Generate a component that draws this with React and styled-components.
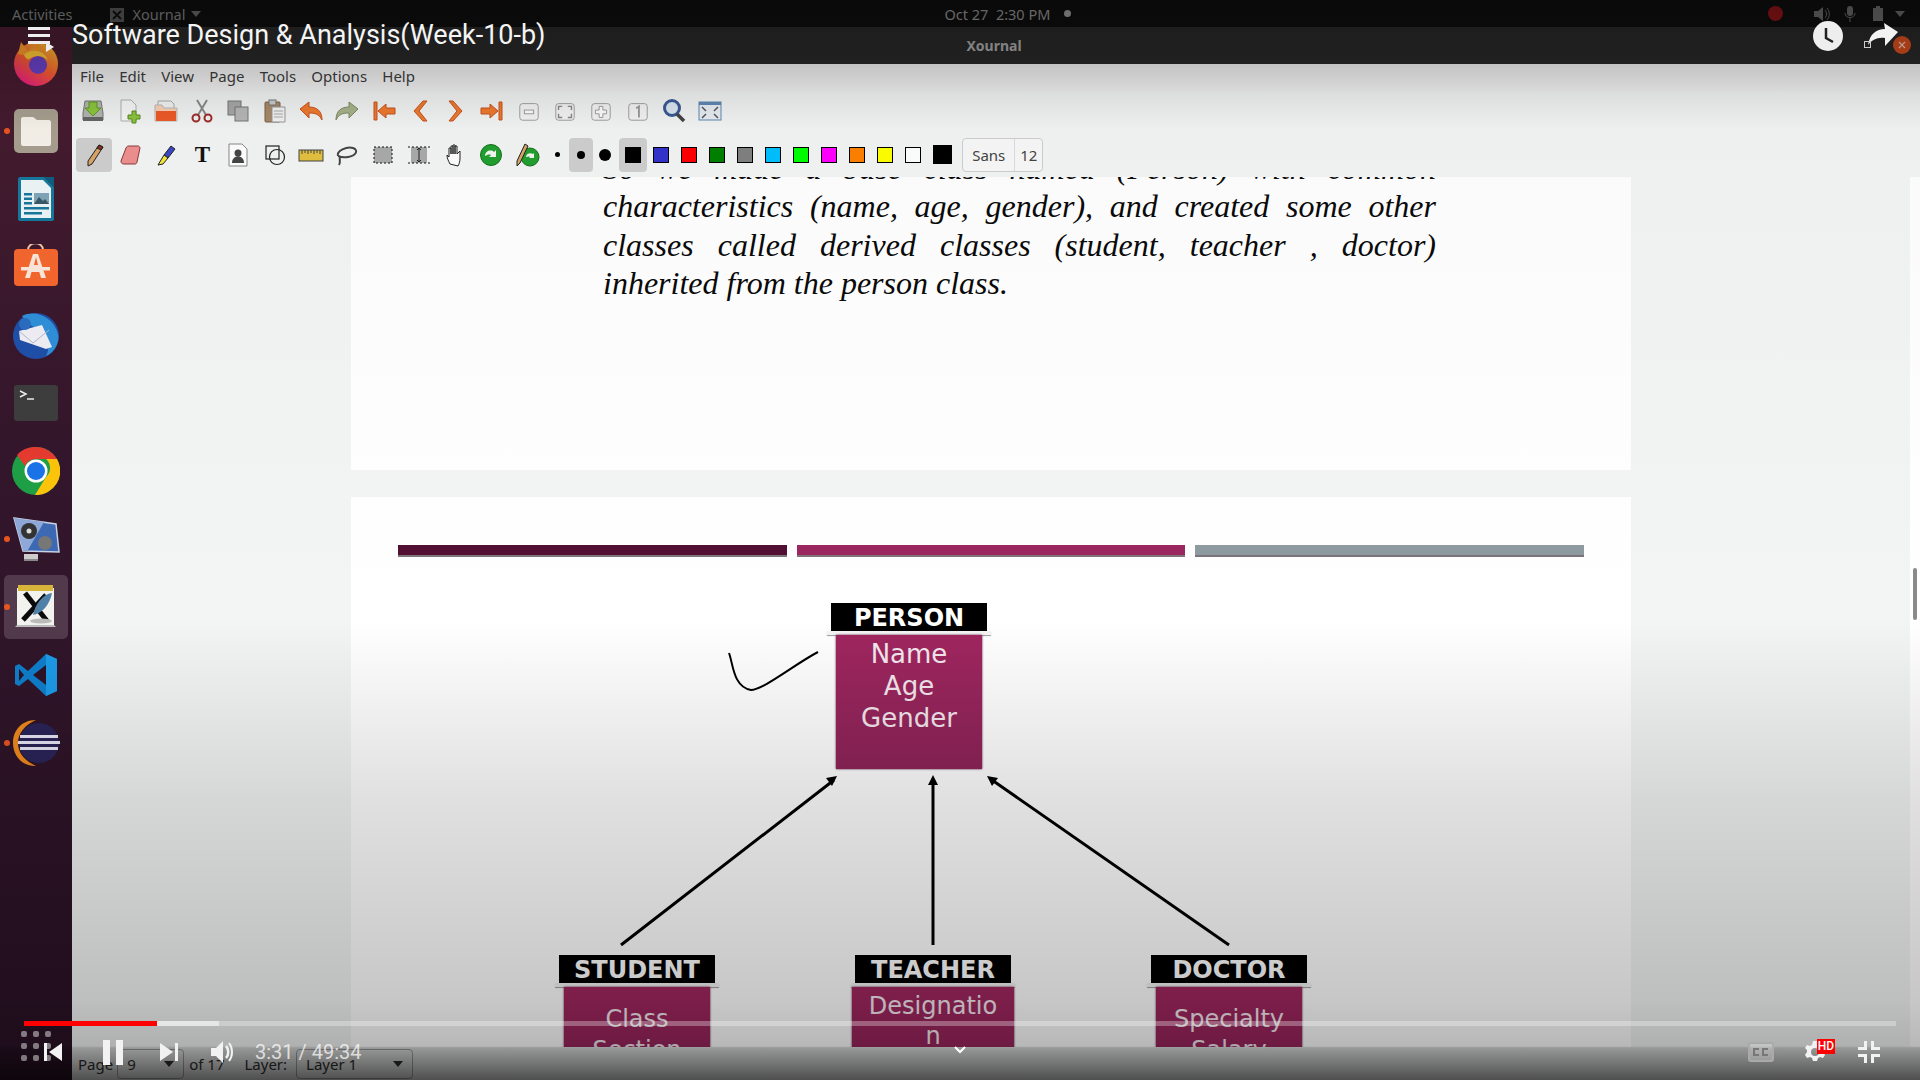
import React from "react";
import styled, { createGlobalStyle } from "styled-components";

const GlobalStyle = createGlobalStyle`
  html, body { margin: 0; padding: 0; background: #000; }
  * { box-sizing: border-box; }
`;

const Screen = styled.div`
  position: relative;
  width: 1920px;
  height: 1080px;
  overflow: hidden;
  display: flex;
  flex-direction: column;
  font-family: "Noto Sans", sans-serif;
`;

const TopBar = styled.div`
  height: 27px;
  background: #0e0e0e;
  color: #7e7e7e;
  font-size: 14.5px;
  display: flex;
  align-items: center;
  padding-left: 12px;
`;
const TopLabel = styled.span`
  margin-left: ${(p) => p.$ml || 0}px;
`;
const Clock = styled.span`
  margin-left: 743px;
  width: 114px;
  white-space: pre;
  color: #8e8e8e;
`;
const Dot = styled.span`
  width: ${(p) => p.$size}px;
  height: ${(p) => p.$size}px;
  border-radius: 50%;
  background: ${(p) => p.$color};
  margin-left: ${(p) => p.$ml || 0}px;
  flex: none;
`;
const Caret = styled.span`
  width: 0;
  height: 0;
  border-left: 5px solid transparent;
  border-right: 5px solid transparent;
  border-top: 6px solid ${(p) => p.$color || "#666"};
  margin-left: ${(p) => p.$ml || 6}px;
  flex: none;
`;
const TrayIcons = styled.div`
  margin-left: auto;
  display: flex;
  align-items: center;
  padding-right: 15px;
`;

const Body = styled.div`
  flex: 1;
  display: flex;
  min-height: 0;
`;

const Dock = styled.div`
  width: 72px;
  flex: none;
  padding-top: 2px;
  background: linear-gradient(#4a1c30, #33162b 40%, #2a1226);
  display: flex;
  flex-direction: column;
`;
const DockSlot = styled.div`
  position: relative;
  height: 68px;
  display: flex;
  align-items: center;
  justify-content: center;
  &::before {
    content: "";
    display: ${(p) => (p.$active ? "block" : "none")};
    position: absolute;
    inset: 2px 4px 2px 4px;
    border-radius: 5px;
    background: rgba(255, 255, 255, 0.16);
  }
  &::after {
    content: "";
    display: ${(p) => (p.$running ? "block" : "none")};
    position: absolute;
    left: 4px;
    top: 31px;
    width: 6px;
    height: 6px;
    border-radius: 50%;
    background: #e95420;
  }
  svg { position: relative; }
`;

const Window = styled.div`
  flex: 1;
  min-width: 0;
  display: flex;
  flex-direction: column;
  background: #f3f4f4;
`;
const TitleBar = styled.div`
  height: 37px;
  background: #282828;
  color: #a8a8a8;
  font-size: 14px;
  font-weight: 700;
  display: flex;
  align-items: center;
  justify-content: center;
  padding-right: 4px;
  position: relative;
`;
const CloseButton = styled.span`
  position: absolute;
  right: 9px;
  top: 9px;
  width: 18px;
  height: 18px;
  border-radius: 50%;
  background: #d64e1e;
  display: flex;
  align-items: center;
  justify-content: center;
`;
const MenuBar = styled.div`
  height: 26px;
  background: #f3f3f3;
  display: flex;
  align-items: center;
  padding: 0 0 2px 8px;
  gap: 15.2px;
  font-size: 15px;
  color: #3c3c3c;
`;
const Toolbar = styled.div`
  height: ${(p) => p.$h}px;
  background: #f3f4f4;
  display: flex;
  align-items: center;
  padding-left: ${(p) => p.$pl || 3}px;
`;
const ToolButton = styled.div`
  width: ${(p) => p.$w || 36.1}px;
  height: 34px;
  flex: none;
  border-radius: 4px;
  background: ${(p) => (p.$active ? "#cfcfcf" : "transparent")};
  display: flex;
  align-items: center;
  justify-content: center;
`;
const ToolLetter = styled.span`
  font-family: "Liberation Serif", serif;
  font-weight: 700;
  font-size: 23px;
  color: #111;
`;
const SizeDot = styled.span`
  width: ${(p) => p.$size}px;
  height: ${(p) => p.$size}px;
  border-radius: 50%;
  background: #000;
`;
const SizeGroup = styled.div`
  display: flex;
  margin-right: 2px;
`;
const Swatch = styled.span`
  width: ${(p) => p.$size || 16}px;
  height: ${(p) => p.$size || 16}px;
  background: ${(p) => p.$color};
  border: 1px solid #000;
`;
const FontBox = styled.div`
  margin-left: 4px;
  width: 81px;
  height: 34px;
  border: 1px solid #cfcfcf;
  border-radius: 4px;
  background: #f8f8f8;
  display: flex;
  align-items: center;
  font-size: 15px;
  color: #444;
`;
const FontName = styled.span`
  width: 52px;
  text-align: center;
  border-right: 1px solid #ddd;
  line-height: 32px;
`;
const FontSize = styled.span`
  flex: 1;
  text-align: center;
`;

const Canvas = styled.div`
  flex: 1;
  min-height: 0;
  display: flex;
`;
const ScrollArea = styled.div`
  flex: 1;
  min-width: 0;
  display: flex;
  flex-direction: column;
  align-items: center;
  gap: 27px;
  overflow: hidden;
`;
const ScrollTrack = styled.div`
  width: 10px;
  background: #fff;
  padding: 391px 3px 0 3px;
`;
const ScrollThumb = styled.div`
  height: 52px;
  border-radius: 3px;
  background: #8a8a8a;
`;
const PageOne = styled.div`
  width: 1280px;
  height: 293px;
  flex: none;
  background: #fff;
  overflow: hidden;
  padding-left: 252px;
`;
const Paragraph = styled.p`
  width: 833px;
  margin: -28px 0 0;
  font-family: "Liberation Serif", serif;
  font-style: italic;
  font-size: 32px;
  line-height: 38.4px;
  text-align: justify;
  color: #0a0a0a;
`;
const PageTwo = styled.div`
  position: relative;
  width: 1280px;
  height: 650px;
  flex: none;
  background: #fff;
`;
const BarRow = styled.div`
  display: grid;
  grid-template-columns: repeat(3, 1fr);
  gap: 10px;
  padding: 48px 47px 0;
`;
const SlideBar = styled.div`
  height: 10px;
  background: ${(p) => p.$color};
  box-shadow: 0 2px 0 #7d7479;
`;
const ArrowLayer = styled.svg`
  position: absolute;
  left: 0;
  top: 0;
`;
const DiagramNode = styled.div`
  position: absolute;
  left: ${(p) => p.$x}px;
  top: ${(p) => p.$y}px;
  width: 164px;
  display: flex;
  flex-direction: column;
  align-items: center;
  font-family: "DejaVu Sans", sans-serif;
`;
const NodeCap = styled.div`
  width: 156px;
  height: 28px;
  background: #000;
  color: #fff;
  font-size: 24px;
  font-weight: 700;
  line-height: 30px;
  text-align: center;
  overflow: hidden;
`;
const NodeShelf = styled.div`
  width: 164px;
  height: 4px;
  background: #f4f4f4;
  box-shadow: 0 1px 1px #999;
`;
const NodeBody = styled.div`
  width: ${(p) => p.$w || 146}px;
  height: ${(p) => p.$h || 134}px;
  padding-top: ${(p) => p.$pt}px;
  background: linear-gradient(#a0265f, #8e2459);
  box-shadow: 0 0 2px #5a1238;
  color: #f4e7ee;
  text-align: center;
  font-size: ${(p) => p.$fs || 24}px;
  line-height: ${(p) => p.$lh || 30}px;
`;

const StatusBar = styled.div`
  height: 33px;
  flex: none;
  background: #f3f4f4;
  display: flex;
  align-items: center;
  padding-left: 6px;
  font-size: 15px;
  color: #333;
`;
const StatusField = styled.div`
  width: ${(p) => p.$w}px;
  height: 30px;
  margin: 0 ${(p) => p.$mr || 5}px 0 ${(p) => p.$ml || 5}px;
  border: 1px solid #aaa;
  border-radius: 4px;
  display: flex;
  align-items: center;
  justify-content: space-between;
  padding: 0 9px;
`;
const StatusLabel = styled.span`
  margin-left: ${(p) => p.$ml || 0}px;
`;

const Overlay = styled.div`
  position: absolute;
  inset: 0;
  pointer-events: none;
  display: flex;
  flex-direction: column;
  justify-content: space-between;
  background: linear-gradient(
    to bottom,
    rgba(0, 0, 0, 0.3) 0,
    rgba(0, 0, 0, 0.2) 64px,
    rgba(0, 0, 0, 0.09) 95px,
    rgba(0, 0, 0, 0.02) 130px,
    rgba(0, 0, 0, 0) 620px,
    rgba(0, 0, 0, 0.12) 800px,
    rgba(0, 0, 0, 0.22) 1000px,
    rgba(0, 0, 0, 0.28) 1046px,
    rgba(0, 0, 0, 0.38) 1048px,
    rgba(0, 0, 0, 0.68) 1080px
  );
`;
const OverlayTop = styled.div`
  display: flex;
  align-items: flex-start;
  padding: 27px 20px 0 28px;
  position: relative;
`;
const VideoTitle = styled.div`
  font-family: Roboto, sans-serif;
  font-size: 27px;
  line-height: 16px;
  margin-left: 18px;
  color: #f4f4f4;
  white-space: nowrap;
`;
const TitleActions = styled.div`
  margin-left: auto;
  display: flex;
  align-items: center;
  gap: 21px;
  margin-top: -6px;
`;
const OverlayBottom = styled.div`
  position: relative;
  height: 59px;
`;
const Progress = styled.div`
  margin: 0 24px;
  height: 5px;
  background: rgba(255, 255, 255, 0.3);
  display: flex;
`;
const ProgressFill = styled.div`
  width: ${(p) => p.$w}px;
  background: ${(p) => p.$color};
`;
const Controls = styled.div`
  display: flex;
  align-items: center;
  height: 34px;
  margin-top: 9px;
  padding: 0 40px 0 21px;
`;
const GridDots = styled.div`
  display: grid;
  grid-template-columns: repeat(3, 6px);
  gap: 6px;
  align-self: flex-start;
  margin-top: -4px;
`;
const GridDot = styled.span`
  width: 6px;
  height: 6px;
  border-radius: 2px;
  background: rgba(255, 255, 255, 0.45);
`;
const Ctl = styled.span`
  display: flex;
  margin-left: ${(p) => p.$ml || 0}px;
`;
const TimeText = styled.span`
  margin-left: 22px;
  font-family: Roboto, sans-serif;
  font-size: 20px;
  color: rgba(255, 255, 255, 0.72);
`;
const RightControls = styled.div`
  margin-left: auto;
  display: flex;
  align-items: center;
`;
const CcBox = styled.span`
  width: 26px;
  height: 20px;
  border: 2px solid #aaa;
  border-radius: 3px;
  background: rgba(255, 255, 255, 0.25);
  display: flex;
  align-items: center;
  justify-content: center;
`;
const GearWrap = styled.span`
  position: relative;
  display: flex;
  margin-left: 29px;
`;
const HdBadge = styled.span`
  position: absolute;
  left: 14px;
  top: -1px;
  width: 18px;
  height: 15px;
  background: #f00;
  color: #fff;
  font-family: Roboto, sans-serif;
  font-size: 12px;
  font-weight: 500;
  line-height: 15px;
  text-align: center;
`;
const Chevron = styled.svg`
  position: absolute;
  left: 954px;
  bottom: 26px;
`;

/* ---- dock icons ---- */
const Firefox = () => (
  <svg width="46" height="46" viewBox="0 0 46 46">
    <defs>
      <linearGradient id="ff" x1="0.8" y1="0" x2="0.2" y2="1">
        <stop offset="0" stopColor="#ffc030" />
        <stop offset="0.5" stopColor="#fb6030" />
        <stop offset="1" stopColor="#f0188a" />
      </linearGradient>
    </defs>
    <circle cx="23" cy="24" r="22" fill="url(#ff)" />
    <path d="M5 14 8 2l7 9 10-8 6 7-14 6z" fill="#fb9a2c" />
    <circle cx="25" cy="25" r="9" fill="#6a42c8" />
    <path d="M11 15c7-7 20-5 24 5-6-5-13-5-19-1-1 1-3 0-5-4z" fill="#ffc838" />
  </svg>
);
const FilesIcon = () => (
  <svg width="46" height="46" viewBox="0 0 46 46">
    <rect x="1" y="1" width="44" height="44" rx="5" fill="#a89f90" />
    <path d="M8 11c0-1 1-2 2-2h10l4 3h12c1 0 2 1 2 2v22c0 1-1 2-2 2H10c-1 0-2-1-2-2z" fill="#f6f2ea" />
  </svg>
);
const WriterIcon = () => (
  <svg width="40" height="46" viewBox="0 0 40 46">
    <path d="M2 3c0-1 1-2 2-2h24l10 10v32c0 1-1 2-2 2H4c-1 0-2-1-2-2z" fill="#16799e" />
    <path d="M5 4h22l8 8v30H5z" fill="#eef5f7" />
    <path d="M28 1h10v10z" fill="#0f5f80" />
    <rect x="18" y="17" width="15" height="11" fill="#7fa7b8" />
    <path d="M18 28l5-7 4 4 2-2 4 5z" fill="#3b5868" />
    <path d="M8 17h8v2.500H8zM8 21.500h8V24H8zM8 26h8v2.500H8zM8 31h25v2.500H8zM8 36h18v2.500H8z" fill="#16799e" />
  </svg>
);
const StoreIcon = () => (
  <svg width="46" height="46" viewBox="0 3 46 46">
    <path d="M15 9c0-9 15-9 15 0" fill="none" stroke="#f8c8a8" strokeWidth="2" />
    <rect x="1" y="8" width="44" height="37" rx="4" fill="#f4662e" />
    <path d="M20 13h5l8 24h-5l-1.700-6H18.500l-1.600 6H12zM21 24h4l-2-8z" fill="#fbe6da" />
    <rect x="8" y="26" width="29" height="3.500" fill="#fbe6da" />
  </svg>
);
const ThunderIcon = () => (
  <svg width="48" height="48" viewBox="0 0 48 48">
    <circle cx="24" cy="25" r="23" fill="#1f4fa8" />
    <path d="M10 5c14-7 32 2 36 18 2 9-4 19-12 22 4-8 3-18-3-23-6-6-14-6-21-17z" fill="#2f8fd8" />
    <path d="M7 20l23-6 10 22-6 2-26-9z" fill="#eeeef4" />
    <path d="M7 20l14 12 16-13" fill="none" stroke="#b6b8c8" strokeWidth="1" />
    <circle cx="13" cy="13" r="6" fill="#2a6cc0" />
  </svg>
);
const TerminalIcon = () => (
  <svg width="44" height="38" viewBox="0 0 44 38">
    <rect width="44" height="36" y="1" rx="3" fill="#3d3d3d" />
    <path d="M6 7l6 3-6 3" fill="none" stroke="#eee" strokeWidth="1.500" />
    <path d="M13 15h7" stroke="#eee" strokeWidth="1.500" />
  </svg>
);
const ChromeIcon = () => (
  <svg width="48" height="48" viewBox="0 0 48 48">
    <circle cx="24" cy="24" r="24" fill="#1fa045" />
    <path d="M24 0a24 24 0 0 1 21 12H24a12 12 0 0 0-11 7L5 8A24 24 0 0 1 24 0z" fill="#e53a30" />
    <path d="M45 12a24 24 0 0 1-22 36l11-18a12 12 0 0 0 0-18z" fill="#fcc40a" />
    <circle cx="24" cy="24" r="11.500" fill="#fff" />
    <circle cx="24" cy="24" r="9" fill="#1a73e8" />
  </svg>
);
const VideoIcon = () => (
  <svg width="48" height="46" viewBox="0 0 48 46">
    <path d="M2 2l42 6 3 28-36-1z" fill="#3d69b4" stroke="#c8d0e4" strokeWidth="1.500" />
    <path d="M2 2l30 4-16 28-5 1z" fill="#8ea9d8" />
    <circle cx="17" cy="15" r="8" fill="#333" />
    <circle cx="17" cy="15" r="2.500" fill="#ddd" />
    <circle cx="33" cy="27" r="7" fill="#777" />
    <rect x="12" y="38" width="14" height="5" fill="#ccc" />
    <rect x="12" y="43" width="14" height="2" fill="#888" />
  </svg>
);
const XournalIcon = () => (
  <svg width="42" height="44" viewBox="0 0 42 44">
    <rect x="2" y="3" width="37" height="37" fill="#f2f2ee" />
    <rect x="3" y="0" width="35" height="6" fill="#d8b53a" />
    <path d="M2 40h37l2 2H0z" fill="#bbb" />
    <path d="M10 8l22 28" stroke="#0b0b0b" strokeWidth="5" />
    <path d="M31 10 8 35" stroke="#0b0b0b" strokeWidth="5" />
    <path d="M37 8c-9 1-17 11-19 22 8-1 17-10 19-22z" fill="#4f80a8" />
    <ellipse cx="26" cy="36" rx="11" ry="2.500" fill="#bbb" />
  </svg>
);
const VsCodeIcon = () => (
  <svg width="44" height="44" viewBox="0 0 44 44">
    <path d="M32 1l11 5v32l-11 5L14 26 5 33l-4-2V13l4-2 9 7z" fill="#0f7fcb" />
    <path d="M32 1l11 5v32l-11 5z" fill="#1d9be8" />
    <path d="M32 12 19 22l13 10z" fill="#2c1428" />
    <path d="M5 16l5 6-5 6z" fill="#2c1428" />
  </svg>
);
const EclipseIcon = () => (
  <svg width="48" height="46" viewBox="0 0 48 46">
    <path d="M24 0C9 0 1 11 1 23s8 23 23 23C13 41 6 33 6 23S13 5 24 0z" fill="#f08a1d" />
    <circle cx="27" cy="23" r="20" fill="#2a2458" />
    <path d="M8 15h38v3H8zM6 21h42v3H6zM8 27h38v3H8z" fill="#e8e6f4" />
  </svg>
);

/* ---- toolbar icons ---- */
const Ico = ({ children, size = 26 }) => (
  <svg width={size} height={size} viewBox="0 0 26 26">
    {children}
  </svg>
);
const orange = { fill: "#f07a30", stroke: "#c8521c", strokeWidth: 1 };
const tileBtn = (inner) => (
  <Ico size={24}>
    <rect x="3" y="5" width="20" height="18" rx="3" fill="#f4f4f4" stroke="#9a9a9a" />
    {inner}
  </Ico>
);
const TOOLS_FILE = [
  <Ico key="s">
    <path d="M3 15l2-12h16l2 12v7H3z" fill="#b4b6b0" stroke="#777" />
    <rect x="3" y="19" width="20" height="4" fill="#666" />
    <path d="M9 4h8v6h4l-8 8-8-8h4z" fill="#8cc63e" stroke="#5a9a20" />
  </Ico>,
  <Ico key="n">
    <path d="M5 2h10l5 5v16H5z" fill="#f8f8f8" stroke="#b0b0b0" />
    <path d="M16 13h4v4h4v4h-4v4h-4v-4h-4v-4h4z" fill="#8cc63e" stroke="#5a8a20" />
  </Ico>,
  <Ico key="o">
    <path d="M5 3h13l3 3v6H5z" fill="#f4f4f4" stroke="#aaa" />
    <path d="M2 7h7l2 3h13v13H2z" fill="#fbd2b4" stroke="#bbb" />
    <path d="M3 13h20v10H3z" fill="#ef5a28" />
  </Ico>,
  <Ico key="c">
    <path d="M8 2l9 15M18 2 9 17" stroke="#8a8a8a" strokeWidth="2" />
    <circle cx="7" cy="20" r="3.500" fill="none" stroke="#a02c2c" strokeWidth="2" />
    <circle cx="19" cy="20" r="3.500" fill="none" stroke="#a02c2c" strokeWidth="2" />
  </Ico>,
  <Ico key="cp">
    <rect x="3" y="3" width="13" height="14" fill="#a8a8a8" stroke="#777" />
    <rect x="10" y="9" width="13" height="14" fill="#b8b8b8" stroke="#777" />
  </Ico>,
  <Ico key="p">
    <rect x="3" y="4" width="15" height="20" rx="1" fill="#a88a68" stroke="#7a6044" />
    <rect x="7" y="2" width="7" height="5" fill="#ccc" stroke="#777" />
    <path d="M10 9h13v15H10z" fill="#f4f4f4" stroke="#999" />
    <path d="M12 13h9M12 16h9M12 19h9" stroke="#aaa" />
  </Ico>,
  <Ico key="u">
    <path d="M2 11 11 4v5c8 0 13 4 13 13-3-6-7-7-13-7v5z" {...orange} />
  </Ico>,
  <Ico key="r">
    <path d="M24 11 15 4v5C7 9 2 13 2 22c3-6 7-7 13-7v5z" fill="#a8b48c" stroke="#7e8a64" />
  </Ico>,
  <Ico key="f">
    <path d="M3 4h3v18H3zM7 13l8-7v4h9v6h-9v4z" {...orange} />
  </Ico>,
  <Ico key="pr">
    <path d="M16 3h4l-8 10 8 10h-4L7 13z" {...orange} />
  </Ico>,
  <Ico key="nx">
    <path d="M10 3H6l8 10-8 10h4l9-10z" {...orange} />
  </Ico>,
  <Ico key="l">
    <path d="M23 4h-3v18h3zM19 13l-8-7v4H2v6h9v4z" {...orange} />
  </Ico>,
  tileBtn(<rect x="8" y="12" width="10" height="4" fill="#fff" stroke="#999" />),
  tileBtn(<path d="M6 12V8h4M16 8h4v4M20 16v4h-4M10 20H6v-4" fill="none" stroke="#888" strokeWidth="1.500" />),
  tileBtn(<path d="M11 8h4v4h4v4h-4v4h-4v-4H7v-4h4z" fill="#fff" stroke="#999" />),
  tileBtn(<path d="M11 10l3-2v12" fill="none" stroke="#999" strokeWidth="2" />),
  <Ico key="z">
    <circle cx="11" cy="10" r="7.500" fill="#dce6f4" stroke="#3a5a94" strokeWidth="3" />
    <path d="M16 16l7 7" stroke="#444" strokeWidth="3.500" />
  </Ico>,
  <Ico key="w">
    <rect x="2" y="4" width="22" height="18" fill="#e8eef4" stroke="#5f88b4" />
    <rect x="2" y="4" width="22" height="3" fill="#5f88b4" />
    <path d="M5 9l4 4M21 9l-4 4M5 20l4-4M21 20l-4-4" stroke="#555" strokeWidth="1.500" />
  </Ico>,
];
const PEN = (
  <Ico>
    <path d="M18 3l4 2-11 17-4 2 0-5z" fill="#d8a468" stroke="#222" />
    <path d="M18 3l4 2-2 3-4-2z" fill="#8a3020" stroke="#222" />
  </Ico>
);
const TOOLS_DRAW = [
  <Ico key="e">
    <path d="M9 6c1-2 2-2 3-2h9c1 0 2 1 2 2l-3 14c0 1-1 2-2 2H7c-2 0-3-1-3-3z" fill="#ef9090" stroke="#8a3a3a" />
  </Ico>,
  <Ico key="h">
    <path d="M18 4l4 3-7 9-4-3z" fill="#3a48c8" stroke="#222" />
    <path d="M11 13l4 3-5 6-5 1z" fill="#f4e83a" stroke="#222" />
  </Ico>,
  <ToolLetter key="t">T</ToolLetter>,
  <Ico key="i">
    <path d="M4 2h13l5 5v17H4z" fill="#fff" stroke="#888" />
    <circle cx="13" cy="11" r="3.500" fill="#444" />
    <path d="M7 21c0-9 12-9 12 0z" fill="#444" />
  </Ico>,
  <Ico key="sh">
    <rect x="4" y="4" width="13" height="13" fill="none" stroke="#222" strokeWidth="1.200" />
    <circle cx="15" cy="15" r="7.500" fill="none" stroke="#222" strokeWidth="1.200" />
  </Ico>,
  <Ico key="ru">
    <rect x="1" y="8" width="24" height="11" fill="#e2c040" stroke="#444" />
    <path d="M4 8v4M7 8v3M10 8v4M13 8v3M16 8v4M19 8v3M22 8v4" stroke="#444" />
  </Ico>,
  <Ico key="la">
    <path d="M4 14c-2-5 9-10 15-8s3 8-5 9-9-1-10-1" fill="none" stroke="#444" strokeWidth="2" />
    <path d="M6 15c-1 3 1 5-1 8" fill="none" stroke="#444" strokeWidth="2" />
  </Ico>,
  <Ico key="sr">
    <rect x="4" y="5" width="18" height="16" fill="#aaa" stroke="#111" strokeDasharray="2 2" />
  </Ico>,
  <Ico key="sv">
    <rect x="5" y="5" width="16" height="16" fill="#aaa" />
    <path d="M2 5h22M2 21h22" stroke="#111" strokeDasharray="2 2" />
    <path d="M13 6v14M11 8l2-2 2 2M11 18l2 2 2-2" fill="none" stroke="#222" />
  </Ico>,
  <Ico key="ha">
    <path d="M8 22c-2-4-3-6-3-9l2 2V6h2v6-8h2v8-9h2v9-8h2v8l3-3v7c0 4-1 6-2 8z" fill="#fff" stroke="#222" strokeLinejoin="round" />
  </Ico>,
  <Ico key="rf">
    <circle cx="13" cy="13" r="10.500" fill="#22a030" stroke="#127018" />
    <path d="M7 14c0-5 6-7 9-4l2-2v7h-7l2-2c-2-1-4 0-6 1z" fill="#f4f8f0" />
  </Ico>,
  <Ico key="pf">
    <circle cx="16" cy="15" r="9" fill="#22a030" stroke="#127018" />
    <path d="M12 15c0-3 4-5 7-3l1-1v5h-5l1-1c-1-1-3 0-4 0z" fill="#f4f8f0" />
    <path d="M11 2l3 2-8 17-3 3 0-5z" fill="#d8a468" stroke="#222" />
  </Ico>,
];
const COLORS = ["#000", "#3333cc", "#f00", "#008000", "#808080", "#00c0ff", "#0f0", "#f0f", "#ff8000", "#ff0", "#fff"];

const Node = ({ x, y, title, w, h, pt, fs, lh, children }) => (
  <DiagramNode $x={x} $y={y}>
    <NodeCap>{title}</NodeCap>
    <NodeShelf />
    <NodeBody $w={w} $h={h} $pt={pt} $fs={fs} $lh={lh}>
      {children}
    </NodeBody>
  </DiagramNode>
);

const App = () => {
  return (
    <Screen>
      <GlobalStyle />
      <TopBar>
        <TopLabel>Activities</TopLabel>
        <TopLabel $ml={38}>
          <svg width="14" height="14" viewBox="0 0 14 14" style={{ verticalAlign: -2 }}>
            <rect width="14" height="14" fill="#555" />
            <path d="M3 3l8 8M11 3l-8 8" stroke="#111" strokeWidth="2" />
          </svg>
        </TopLabel>
        <TopLabel $ml={8}>Xournal</TopLabel>
        <Caret />
        <Clock>Oct 27  2:30 PM</Clock>
        <Dot $size={7} $color="#999" $ml={6} />
        <TrayIcons>
          <Dot $size={15} $color="#8a1418" />
          <svg width="16" height="14" viewBox="0 0 16 14" style={{ marginLeft: 31 }}>
            <path d="M0 4h4l5-4v14L4 10H0z" fill="#666" />
            <path d="M11 3c2 2 2 6 0 8M13 1c3 3 3 9 0 12" fill="none" stroke="#666" />
          </svg>
          <svg width="12" height="16" viewBox="0 0 12 16" style={{ marginLeft: 14 }}>
            <rect x="3" y="0" width="6" height="10" rx="3" fill="#666" />
            <path d="M1 7c0 6 10 6 10 0M6 12v4" fill="none" stroke="#666" />
          </svg>
          <svg width="10" height="15" viewBox="0 0 10 15" style={{ marginLeft: 17 }}>
            <path d="M3 0h4v2h3v13H0V2h3z" fill="#666" />
          </svg>
          <Caret $ml={12} />
        </TrayIcons>
      </TopBar>
      <Body>
        <Dock>
          <DockSlot><Firefox /></DockSlot>
          <DockSlot $running><FilesIcon /></DockSlot>
          <DockSlot><WriterIcon /></DockSlot>
          <DockSlot><StoreIcon /></DockSlot>
          <DockSlot><ThunderIcon /></DockSlot>
          <DockSlot><TerminalIcon /></DockSlot>
          <DockSlot><ChromeIcon /></DockSlot>
          <DockSlot $running><VideoIcon /></DockSlot>
          <DockSlot $running $active><XournalIcon /></DockSlot>
          <DockSlot><VsCodeIcon /></DockSlot>
          <DockSlot $running><EclipseIcon /></DockSlot>
        </Dock>
        <Window>
          <TitleBar>
            Xournal
            <CloseButton>
              <svg width="8" height="8" viewBox="0 0 8 8">
                <path d="M1 1l6 6M7 1 1 7" stroke="#f4c8b8" strokeWidth="1.200" />
              </svg>
            </CloseButton>
          </TitleBar>
          <MenuBar>
            {["File", "Edit", "View", "Page", "Tools", "Options", "Help"].map((m) => (
              <span key={m}>{m}</span>
            ))}
          </MenuBar>
          <Toolbar $h={42}>
            {TOOLS_FILE.map((icon, i) => (
              <ToolButton key={i} $w={36.3}>
                {icon}
              </ToolButton>
            ))}
          </Toolbar>
          <Toolbar $h={45} $pl={4}>
            <ToolButton $active>{PEN}</ToolButton>
            {TOOLS_DRAW.map((icon, i) => (
              <ToolButton key={i}>{icon}</ToolButton>
            ))}
            <SizeGroup>
              <ToolButton $w={24}><SizeDot $size={5} /></ToolButton>
              <ToolButton $w={24} $active><SizeDot $size={8} /></ToolButton>
              <ToolButton $w={24}><SizeDot $size={12} /></ToolButton>
            </SizeGroup>
            {COLORS.map((c, i) => (
              <ToolButton key={c} $w={28} $active={i === 0}>
                <Swatch $color={c} />
              </ToolButton>
            ))}
            <ToolButton $w={31}>
              <Swatch $color="#000" $size={19} />
            </ToolButton>
            <FontBox>
              <FontName>Sans</FontName>
              <FontSize>12</FontSize>
            </FontBox>
          </Toolbar>
          <Canvas>
            <ScrollArea>
              <PageOne>
                <Paragraph>
                  So we made a base class named (Person) with common characteristics (name, age,
                  gender), and created some other classes called derived classes (student, teacher ,
                  doctor) inherited from the person class.
                </Paragraph>
              </PageOne>
              <PageTwo>
                <BarRow>
                  <SlideBar $color="#510f33" />
                  <SlideBar $color="#9b2761" />
                  <SlideBar $color="#8d9a9f" />
                </BarRow>
                <ArrowLayer width="1280" height="560" viewBox="0 0 1280 560">
                  <path d="M378 156c4 10 4 34 22 37 12 0 44-26 67-38" fill="none" stroke="#000" strokeWidth="2" />
                  <g stroke="#000" strokeWidth="3" fill="#000">
                    <path d="M270 448 483 283" />
                    <path d="M582 448V284" />
                    <path d="M878 448 641 283" />
                  </g>
                  <path d="M486 279l-11 2 6 8zM582 278l-5 10h10zM636 279l11 2-6 8z" fill="#000" />
                </ArrowLayer>
                <Node x={476} y={106} title="PERSON" pt={3} fs={26} lh={32}>
                  Name
                  <br />
                  Age
                  <br />
                  Gender
                </Node>
                <Node x={204} y={458} title="STUDENT" pt={17} lh={31}>
                  Class
                  <br />
                  Section
                </Node>
                <Node x={500} y={458} title="TEACHER" w={162} pt={4}>
                  Designatio
                  <br />n
                </Node>
                <Node x={796} y={458} title="DOCTOR" pt={17} lh={31}>
                  Specialty
                  <br />
                  Salary
                </Node>
              </PageTwo>
            </ScrollArea>
            <ScrollTrack>
              <ScrollThumb />
            </ScrollTrack>
          </Canvas>
          <StatusBar>
            Page
            <StatusField $w={67} $ml={4}>
              9<Caret $color="#333" />
            </StatusField>
            of 17
            <StatusLabel $ml={20}>Layer:</StatusLabel>
            <StatusField $w={117} $ml={9}>
              Layer 1
              <Caret $color="#333" />
            </StatusField>
          </StatusBar>
        </Window>
      </Body>
      <Overlay>
        <OverlayTop>
          <svg width="26" height="26" viewBox="0 0 26 26">
            <path d="M0 0h22v3H0zM0 7h22v3H0zM0 14h22v3H0z" fill="#eee" />
            <path d="M18 15l8 5-8 5z" fill="#eee" />
          </svg>
          <VideoTitle>Software Design &amp; Analysis(Week-10-b)</VideoTitle>
          <TitleActions>
            <svg width="30" height="30" viewBox="0 0 30 30">
              <circle cx="15" cy="15" r="15" fill="#eee" />
              <path d="M13 7v10l7 4" fill="none" stroke="#222" strokeWidth="2.500" />
            </svg>
            <svg width="36" height="26" viewBox="0 0 36 26">
              <path d="M20 0l14 9-13 14v-8C13 14 8 17 4 22 6 11 12 6 21 6z" fill="#f2f2f2" />
              <rect x="0.500" y="18.500" width="6" height="6" fill="none" stroke="#ccc" />
            </svg>
          </TitleActions>
        </OverlayTop>
        <OverlayBottom>
          <Progress>
            <ProgressFill $w={133} $color="#f00" />
            <ProgressFill $w={62} $color="rgba(255,255,255,0.5)" />
          </Progress>
          <Controls>
            <GridDots>
              {Array(9)
                .fill()
                .map((_, index) => (
                  <GridDot key={index} />
                ))}
            </GridDots>
            <Ctl $ml={-7}>
              <svg width="18" height="18" viewBox="0 0 18 18">
                <path d="M0 0h3v18H0zM18 0v18L5 9z" fill="#f2f2f2" />
              </svg>
            </Ctl>
            <Ctl $ml={41}>
              <svg width="20" height="25" viewBox="0 0 20 25">
                <path d="M0 0h7v25H0zM13 0h7v25h-7z" fill="#f2f2f2" />
              </svg>
            </Ctl>
            <Ctl $ml={37}>
              <svg width="18" height="18" viewBox="0 0 18 18">
                <path d="M18 0h-3v18h3zM0 0v18l13-9z" fill="#f2f2f2" />
              </svg>
            </Ctl>
            <Ctl $ml={33}>
              <svg width="22" height="22" viewBox="0 0 22 22">
                <path d="M0 7h5l7-7v22l-7-7H0z" fill="#f2f2f2" />
                <path d="M15 5c3 3 3 9 0 12" fill="none" stroke="#f2f2f2" strokeWidth="2.500" />
                <path d="M18 2c4 5 4 13 0 18" fill="none" stroke="#f2f2f2" strokeWidth="2" />
              </svg>
            </Ctl>
            <TimeText>3:31 / 49:34</TimeText>
            <RightControls>
              <CcBox>
                <svg width="16" height="8" viewBox="0 0 16 8">
                  <path d="M6 1H1v6h5M15 1h-5v6h5" fill="none" stroke="#777" strokeWidth="2" />
                </svg>
              </CcBox>
              <GearWrap>
                <svg width="24" height="24" viewBox="0 0 24 24">
                  <path d="M12 8a4 4 0 1 0 0 8 4 4 0 0 0 0-8zm-2-7h4l1 3 2 1 3-1 2 3-2 3v2l2 3-2 3-3-1-2 1-1 3h-4l-1-3-2-1-3 1-2-3 2-3v-2L2 8l2-3 3 1 2-1z" fill="#f2f2f2" fillRule="evenodd" />
                </svg>
                <HdBadge>HD</HdBadge>
              </GearWrap>
              <Ctl $ml={31}>
                <svg width="22" height="22" viewBox="0 0 22 22">
                  <path d="M6 0h3v9H0V6h6zM13 0h3v6h6v3h-9zM0 13h9v9H6v-6H0zM13 13h9v3h-6v6h-3z" fill="#f2f2f2" />
                </svg>
              </Ctl>
            </RightControls>
          </Controls>
          <Chevron width="12" height="8" viewBox="0 0 12 8">
            <path d="M1 1l5 5 5-5" fill="none" stroke="#fff" strokeWidth="2" />
          </Chevron>
        </OverlayBottom>
      </Overlay>
    </Screen>
  );
};

export default App;
